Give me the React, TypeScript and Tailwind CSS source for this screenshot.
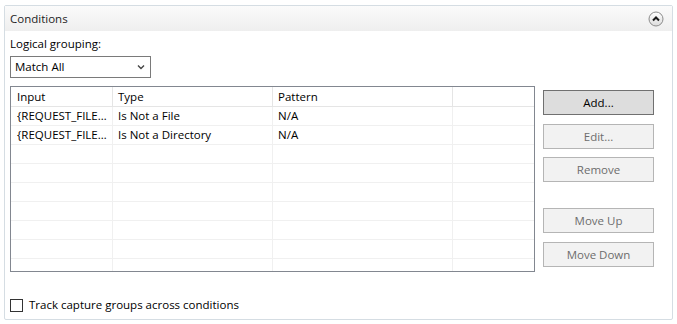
import React from "react";

const columns = [
  { label: "Input", width: "w-[102px]", pad: "pl-[6px]" },
  { label: "Type", width: "w-[160px]", pad: "pl-[5px]" },
  { label: "Pattern", width: "w-[180px]", pad: "pl-[5px]" },
];

const rows = [
  ["{REQUEST_FILE…", "Is Not a File", "N/A"],
  ["{REQUEST_FILE…", "Is Not a Directory", "N/A"],
  ["", "", ""],
  ["", "", ""],
  ["", "", ""],
  ["", "", ""],
  ["", "", ""],
  ["", "", ""],
  ["", "", ""],
  ["", "", ""],
];

function CollapseIcon() {
  return (
    <svg width="16" height="16" viewBox="0 0 16 16">
      <defs>
        <linearGradient id="cg" x1="0" y1="0" x2="0" y2="1">
          <stop offset="0" stopColor="#ffffff" />
          <stop offset="1" stopColor="#dcdcdc" />
        </linearGradient>
      </defs>
      <circle cx="8" cy="8" r="7" fill="url(#cg)" stroke="#8c8c8c" strokeWidth="1" />
      <path d="M5 9.5 L8 6.5 L11 9.5" fill="none" stroke="#1a1a1a" strokeWidth="2" />
    </svg>
  );
}

function Button({ label, primary = false }: { label: string; primary?: boolean }) {
  return (
    <div
      className={`flex h-[25px] w-[111px] items-center justify-center border ${
        primary ? "border-[#707070] bg-[#dddddd] text-black" : "border-[#b5b5b5] bg-[#f2f2f2] text-[#6d6d6d]"
      }`}
    >
      {label}
    </div>
  );
}

export default function App() {
  return (
    <div
      className="h-[324px] w-[677px] bg-white pl-[4px] pt-[5px] text-[11.5px] leading-[16px] text-black"
      style={{ fontFamily: '"Open Sans", "Noto Sans", sans-serif' }}
    >
      <div className="flex h-[315px] w-[669px] flex-col rounded-[2px] border border-[#d5dde3]">
        <div className="flex h-[25px] items-center justify-between bg-gradient-to-b from-[#fbfbfb] to-[#eeeeee] pl-[5px] pr-[8px] text-[#1e1e1e]">
          <span>Conditions</span>
          <CollapseIcon />
        </div>

        <div className="flex flex-1 flex-col px-[5px] pt-[5px]">
          <div>Logical grouping:</div>
          <div className="mt-[4px] flex h-[22px] w-[141px] items-center justify-between border border-[#7a7a7a] pl-[4px] pr-[5px]">
            <span>Match All</span>
            <svg width="8" height="6" viewBox="0 0 8 6">
              <path d="M1 1.5 L4 4.5 L7 1.5" fill="none" stroke="#444" strokeWidth="1.4" />
            </svg>
          </div>

          <div className="mt-[8px] flex">
            <div className="h-[186px] w-[525px] overflow-hidden border border-[#828790]">
              <div className="flex h-[20px] border-b border-[#e5e5e5]">
                {columns.map((c) => (
                  <div key={c.label} className={`${c.width} ${c.pad} flex items-center border-r border-[#e5e5e5]`}>
                    {c.label}
                  </div>
                ))}
                <div className="flex-1" />
              </div>
              {rows.map((r, i) => (
                <div key={i} className="flex h-[19px] border-b border-[#f0f0f0]">
                  {columns.map((c, j) => (
                    <div key={j} className={`${c.width} ${c.pad} flex items-center whitespace-nowrap border-r border-[#f0f0f0]`}>
                      {r[j]}
                    </div>
                  ))}
                  <div className="flex-1" />
                </div>
              ))}
            </div>

            <div className="ml-[8px] flex flex-col pt-[4px]">
              <Button label="Add..." primary />
              <div className="mt-[9px]">
                <Button label="Edit..." />
              </div>
              <div className="mt-[8px]">
                <Button label="Remove" />
              </div>
              <div className="mt-[26px]">
                <Button label="Move Up" />
              </div>
              <div className="mt-[9px]">
                <Button label="Move Down" />
              </div>
            </div>
          </div>

          <div className="mt-[25px] flex items-center">
            <div className="h-[13px] w-[13px] border border-[#333333] bg-white" />
            <span className="ml-[6px]">Track capture groups across conditions</span>
          </div>
        </div>
      </div>
    </div>
  );
}
